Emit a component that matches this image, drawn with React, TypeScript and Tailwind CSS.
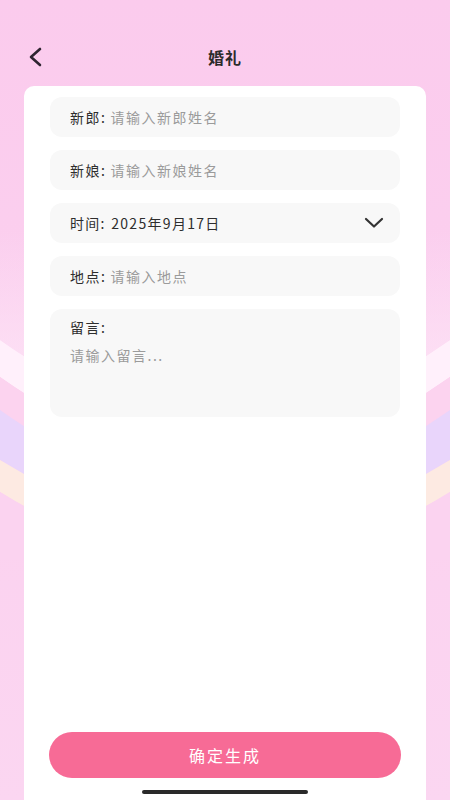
import React from "react";

const font = { fontFamily: '"Noto Sans CJK SC", "Noto Sans", sans-serif' };

function Field({ label, placeholder }: { label: string; placeholder: string }) {
  return (
    <div className="h-[40px] rounded-[12px] bg-[#f8f8f8] px-[20px] flex items-center text-[14px] tracking-[1.5px]">
      <span className="text-[#2e2e2e]">{label}:</span>
      <span className="text-[#9b9b9b] ml-[4px]">{placeholder}</span>
    </div>
  );
}

export default function App() {
  return (
    <div
      className="relative w-[450px] h-[800px] overflow-hidden bg-gradient-to-b from-[#fbcbed] to-[#fbd6f1]"
      style={font}
    >
      <svg className="absolute inset-0" width="450" height="800" viewBox="0 0 450 800">
        <defs>
          <linearGradient id="topfade" x1="0" y1="0" x2="0" y2="1">
            <stop offset="0" stopColor="#fde4f6" stopOpacity="0" />
            <stop offset="1" stopColor="#fde6f7" stopOpacity="1" />
          </linearGradient>
        </defs>
        <path d="M0 230 L450 230 L450 340 Q225 500 0 340 Z" fill="url(#topfade)" />
        <path d="M0 340 Q225 500 450 340 L450 377 Q225 537 0 377 Z" fill="#fff0fb" />
        <path d="M0 377 Q225 537 450 377 L450 410 Q225 570 0 410 Z" fill="#fcd3ef" />
        <path d="M0 410 Q225 570 450 410 L450 460 Q225 600 0 460 Z" fill="#e9d5fb" />
        <path d="M0 460 Q225 600 450 460 L450 492 Q225 632 0 492 Z" fill="#fdeae2" />
        <path d="M0 492 Q225 632 450 492 L450 560 L0 560 Z" fill="#fbd3f0" />
      </svg>

      <div className="relative flex flex-col h-full">
        <div className="h-[38px] mt-[38px] mb-[10px] relative flex items-center justify-center">
          <svg
            className="absolute left-[27px] top-[9px]"
            width="18"
            height="20"
            viewBox="0 0 18 20"
            fill="none"
          >
            <path d="M13 2 L4 10 L13 18" stroke="#2e2430" strokeWidth="2.6" strokeLinecap="round" strokeLinejoin="round" />
          </svg>
          <span className="text-[16px] font-bold text-[#2b2b2b] tracking-[1px]">婚礼</span>
        </div>

        <div className="flex-1 mx-[24px] bg-white rounded-t-[10px] px-[26px] pt-[11px] flex flex-col">
          <div className="flex flex-col gap-[13px]">
            <Field label="新郎" placeholder="请输入新郎姓名" />
            <Field label="新娘" placeholder="请输入新娘姓名" />
            <div className="h-[40px] rounded-[12px] bg-[#f8f8f8] pl-[20px] pr-[16px] flex items-center justify-between text-[14px] tracking-[1.3px]">
              <span className="text-[#2e2e2e]">
                时间: <span className="ml-[1px]">2025年9月17日</span>
              </span>
              <svg width="20" height="12" viewBox="0 0 20 12" fill="none">
                <path d="M2 2 L10 9.5 L18 2" stroke="#333" strokeWidth="2.2" strokeLinecap="round" strokeLinejoin="round" />
              </svg>
            </div>
            <Field label="地点" placeholder="请输入地点" />
            <div className="h-[108px] rounded-[12px] bg-[#f8f8f8] px-[20px] pt-[10px] flex flex-col text-[14px] tracking-[1.5px]">
              <span className="text-[#2e2e2e] leading-[16px]">留言:</span>
              <span className="text-[#9b9b9b] leading-[16px] mt-[12px]">请输入留言...</span>
            </div>
          </div>
          <div className="flex-1" />
          <button className="-mx-[1px] h-[46px] mb-[22px] rounded-full bg-[#f76b96] text-white text-[16px] tracking-[2px] flex items-center justify-center">
            确定生成
          </button>
        </div>
      </div>

      <div className="absolute left-[142px] bottom-[6px] w-[166px] h-[4px] rounded-full bg-[#2a2a2a]" />
    </div>
  );
}
